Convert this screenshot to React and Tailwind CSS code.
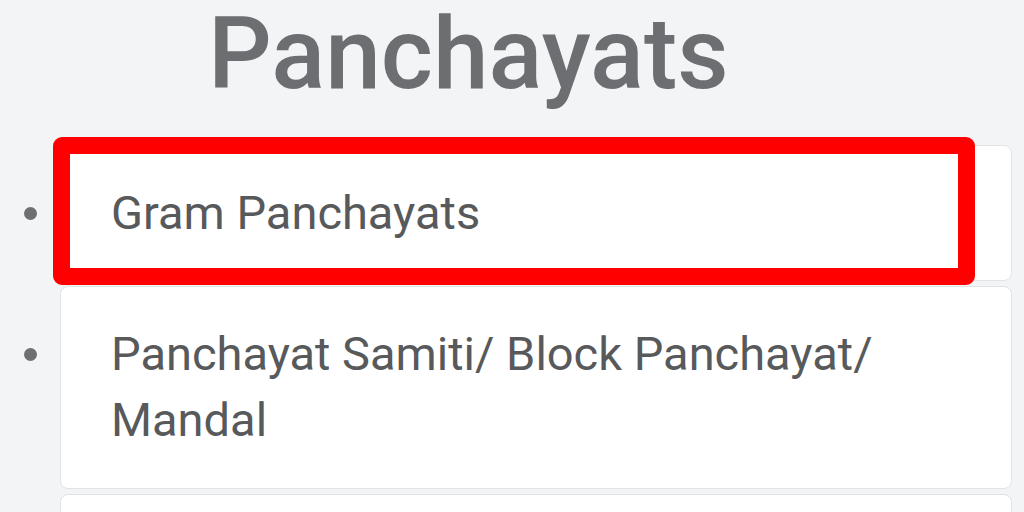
export default function App() {
  const font = { fontFamily: 'Roboto, "Noto Sans", sans-serif' };
  return (
    <div className="w-[1024px] h-[512px] overflow-hidden bg-[#f3f4f6]" style={font}>
      <div className="pt-[4px] pl-[208px] text-[100px] leading-[100px] font-medium text-[#6d6e71]">
        Panchayats
      </div>
      <ul className="mt-[41px] flex flex-col gap-[5px] pr-[12px]">
        <li className="flex items-center">
          <div className="w-[60px] flex justify-center">
            <span className="block w-[13px] h-[13px] rounded-full bg-[#6f6f73]" />
          </div>
          <div className="relative flex-1">
            <div className="bg-white border border-[#e2e3e5] rounded-[8px] pl-[50px] py-[34px] text-[47px] leading-[66px] text-[#58595b]">
              Gram Panchayats
            </div>
            <div className="absolute left-[-7px] top-[-8px] w-[922px] h-[148px] border-[17px] border-[#ff0000] rounded-[9px]" />
          </div>
        </li>
        <li className="flex items-center">
          <div className="w-[60px] flex justify-center self-start pt-[62px]">
            <span className="block w-[13px] h-[13px] rounded-full bg-[#6f6f73]" />
          </div>
          <div className="flex-1 bg-white border border-[#e2e3e5] rounded-[8px] pl-[50px] pt-[34px] pb-[35px] text-[47px] leading-[66px] text-[#58595b]">
            Panchayat Samiti/ Block Panchayat/<br />Mandal
          </div>
        </li>
        <li className="flex items-center">
          <div className="w-[60px]" />
          <div className="flex-1 h-[136px] bg-white border border-[#e2e3e5] rounded-[8px]" />
        </li>
      </ul>
    </div>
  );
}
